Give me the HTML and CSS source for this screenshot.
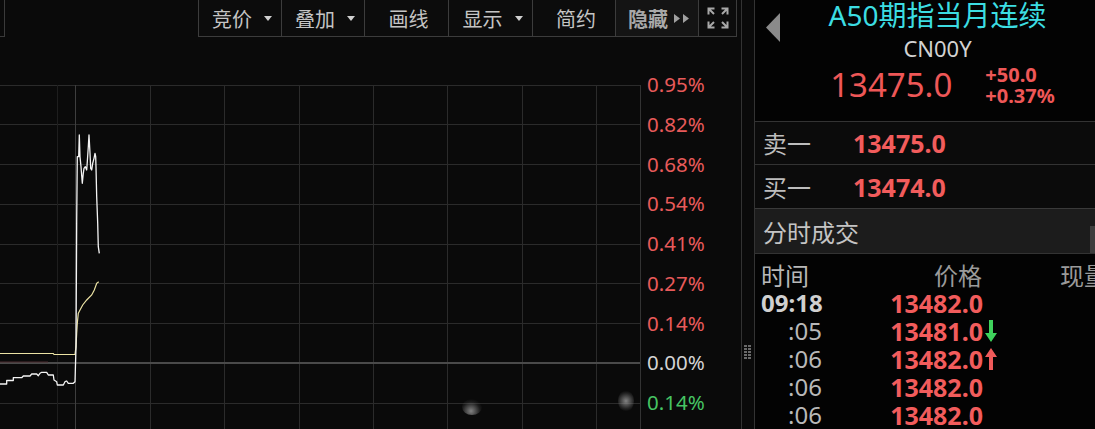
FILE: index.html
```html
<!DOCTYPE html>
<html lang="zh-CN">
<head>
<meta charset="utf-8">
<title>A50期指当月连续</title>
<link rel="stylesheet" href="styles.css">
</head>
<body>
<div class="app">
  <div class="left">
    <div class="toolbar">
      <div class="tb-edge"></div>
      <div class="tb-spacer"></div>
      <div class="tb-btn first w84"><span>竞价</span><svg class="caret" width="8" height="5" viewBox="0 0 8 5"><polygon points="0,0 8,0 4,5"/></svg></div>
      <div class="tb-btn w83"><span>叠加</span><svg class="caret" width="8" height="5" viewBox="0 0 8 5"><polygon points="0,0 8,0 4,5"/></svg></div>
      <div class="tb-btn w84"><span>画线</span></div>
      <div class="tb-btn w84"><span>显示</span><svg class="caret" width="8" height="5" viewBox="0 0 8 5"><polygon points="0,0 8,0 4,5"/></svg></div>
      <div class="tb-btn w83"><span>简约</span></div>
      <div class="tb-btn w83 hide"><span>隐藏</span><svg class="dbl" width="16" height="9" viewBox="0 0 16 9"><polygon points="0,0 6,4.5 0,9"/><polygon points="9,0 15,4.5 9,9"/></svg></div>
      <div class="tb-btn w38 full"><svg width="22" height="22" viewBox="0 0 22 22"><path d="M1.5 7.5V1.5H7.5M1.5 1.5L7 7M14.5 1.5H20.5V7.5M20.5 1.5L15 7M1.5 14.5V20.5H7.5M1.5 20.5L7 15M20.5 14.5V20.5H14.5M20.5 20.5L15 15"/></svg></div>
    </div>
    <div class="chart">
      <svg class="plot" width="641" height="392" viewBox="0 37 641 392">
        <g class="grid">
          <line x1="0" y1="85.5" x2="641" y2="85.5"/>
          <line x1="0" y1="124.5" x2="641" y2="124.5"/>
          <line x1="0" y1="164.5" x2="641" y2="164.5"/>
          <line x1="0" y1="204.5" x2="641" y2="204.5"/>
          <line x1="0" y1="244.5" x2="641" y2="244.5"/>
          <line x1="0" y1="283.5" x2="641" y2="283.5"/>
          <line x1="0" y1="323.5" x2="641" y2="323.5"/>
          <line x1="0" y1="403.5" x2="641" y2="403.5"/>
          <line class="faint" x1="57.5" y1="85" x2="57.5" y2="429"/>
          <line x1="150.5" y1="85" x2="150.5" y2="429"/>
          <line x1="224.5" y1="85" x2="224.5" y2="429"/>
          <line x1="299.5" y1="85" x2="299.5" y2="429"/>
          <line x1="373.5" y1="85" x2="373.5" y2="429"/>
          <line x1="447.5" y1="85" x2="447.5" y2="429"/>
          <line x1="522.5" y1="85" x2="522.5" y2="429"/>
          <line x1="596.5" y1="85" x2="596.5" y2="429"/>
        </g>
        <line class="zero" x1="0" y1="363" x2="641" y2="363"/>
        <line class="zero-red" x1="0" y1="362" x2="48" y2="362"/>
        <line class="open" x1="75.5" y1="85" x2="75.5" y2="429"/>
        <line class="border" x1="640.5" y1="85" x2="640.5" y2="429"/>
        <polyline class="avg" points="0,353.5 53.3,353.5 54,354.5 75,354.5 76,346.7 76.7,333.3 77.3,323.3 78.3,313.3 80,310 82.7,305 86.7,300 91.7,295 94.3,290 96.7,283.3 98.7,281.7"/>
        <polyline class="price" points="0,384 6.7,384 6.7,380.5 13.3,380.5 13.3,377.7 21.7,377.7 23.3,376 30,376 31.7,374 36.7,374 38.3,375.7 40,373.3 41.7,372.3 46.7,372.3 48.3,375 53.3,375 54,380 56.7,381.7 57.3,385 63.3,385 65,381.7 66.7,381 68.3,383.3 73.3,383.3 75,381.7 76,346.7 76.7,220 77.3,156.7 78.7,156.7 79.3,135 80,156.7 81,166.7 82.3,183.3 83.3,173.3 84,168.3 85.3,166.7 86.7,170 87.3,161.7 88.3,146.7 89,135 90,153.3 90.7,168.3 91.7,170 92.7,163.3 94,158.3 95,153.3 95.7,156.7 96,167.3 96.7,196.7 97.7,223.3 98.3,246.7 99.3,253.3"/>
      </svg>
      <div class="axis">
        <div class="lbl up">0.95%</div>
        <div class="lbl up">0.82%</div>
        <div class="lbl up">0.68%</div>
        <div class="lbl up">0.54%</div>
        <div class="lbl up">0.41%</div>
        <div class="lbl up">0.27%</div>
        <div class="lbl up">0.14%</div>
        <div class="lbl flat">0.00%</div>
        <div class="lbl down">0.14%</div>
      </div>
      <div class="blob blob-a"></div>
      <div class="blob blob-b"></div>
    </div>
  </div>
  <div class="splitter">
    <svg class="grip" width="8" height="16" viewBox="0 0 8 16"><g><rect x="0" y="0" width="3" height="2"/><rect x="4" y="0" width="3" height="2"/><rect x="0" y="3" width="3" height="2"/><rect x="4" y="3" width="3" height="2"/><rect x="0" y="6" width="3" height="2"/><rect x="4" y="6" width="3" height="2"/><rect x="0" y="9" width="3" height="2"/><rect x="4" y="9" width="3" height="2"/><rect x="0" y="12" width="3" height="2"/><rect x="4" y="12" width="3" height="2"/></g></svg>
  </div>
  <div class="panel">
    <div class="quote">
      <svg class="back" width="14" height="29" viewBox="0 0 14 29"><polygon points="14,0 14,29 0,14.5"/></svg>
      <div class="info">
        <div class="title">A50期指当月连续</div>
        <div class="code">CN00Y</div>
        <div class="price-row">
          <div class="last">13475.0</div>
          <div class="chg"><div>+50.0</div><div>+0.37%</div></div>
        </div>
      </div>
    </div>
    <div class="book-row"><span class="book-label">卖一</span><span class="book-price">13475.0</span></div>
    <div class="book-row"><span class="book-label">买一</span><span class="book-price">13474.0</span></div>
    <div class="ticks-head"><span>分时成交</span><div class="head-btn"></div></div>
    <div class="ticks">
      <div class="tick thead"><span class="t">时间</span><span class="p">价格</span><span class="a"></span><span class="v">现量</span></div>
      <div class="tick"><span class="t bold">09:18</span><span class="p">13482.0</span><span class="a"></span><span class="v"></span></div>
      <div class="tick"><span class="t">:05</span><span class="p">13481.0</span><span class="a"><svg width="12" height="22" viewBox="0 0 12 22"><path class="dn" d="M4 0H8V13H12L6 22L0 13H4Z"/></svg></span><span class="v"></span></div>
      <div class="tick"><span class="t">:06</span><span class="p">13482.0</span><span class="a"><svg width="12" height="22" viewBox="0 0 12 22"><path class="upa" d="M4 22H8V9H12L6 0L0 9H4Z"/></svg></span><span class="v"></span></div>
      <div class="tick"><span class="t">:06</span><span class="p">13482.0</span><span class="a"></span><span class="v"></span></div>
      <div class="tick"><span class="t">:06</span><span class="p">13482.0</span><span class="a"></span><span class="v"></span></div>
    </div>
  </div>
</div>
</body>
</html>
```

FILE: styles.css
```css
* { box-sizing: border-box; }
html, body { margin: 0; padding: 0; }
body {
  width: 1095px;
  height: 429px;
  overflow: hidden;
  background: #0a0a0a;
  font-family: "Noto Sans", "Noto Sans CJK SC", sans-serif;
  color: #c0c0c0;
}
.app { display: flex; width: 1095px; height: 429px; }

/* left side */
.left { width: 741px; display: flex; flex-direction: column; }
.toolbar { display: flex; height: 37px; }
.tb-edge { width: 5px; border-right: 1px solid #3a3a3a; border-bottom: 1px solid #3a3a3a; }
.tb-spacer { width: 193px; }
.tb-btn {
  height: 37px;
  display: flex;
  align-items: center;
  justify-content: center;
  gap: 12px;
  border-right: 1px solid #3c3c3c;
  border-bottom: 1px solid #3c3c3c;
  background: #0c0c0c;
  font-family: "Noto Sans CJK SC", sans-serif;
  font-size: 20px;
  color: #c4c4c4;
  padding-left: 4px;
}
.tb-btn.first { border-left: 1px solid #3c3c3c; }
.w84 { width: 84px; }
.w83 { width: 83px; }
.w38 { width: 38px; padding-left: 0; }
.caret polygon { fill: #d0d0d0; }
.tb-btn.hide { background: #141414; color: #a8a8a8; font-weight: 700; gap: 6px; }
.dbl polygon { fill: #a0a0a0; }
.full svg path { fill: none; stroke: #a8a8a8; stroke-width: 2; }

.chart { position: relative; flex: 1; display: flex; }
.plot { display: block; flex: none; }
.grid line { stroke: #2b2b2b; stroke-width: 1; }
.grid line.faint { stroke: #1e1e1e; }
.zero { stroke: #4a4a4a; stroke-width: 2; }
.zero-red { stroke: #4a2a2e; stroke-width: 1; }
.open { stroke: #3e3e3e; stroke-width: 1; }
.border { stroke: #333; stroke-width: 1; }
.avg { fill: none; stroke: #ece3a4; stroke-width: 1.2; }
.price { fill: none; stroke: #f4f4f4; stroke-width: 1.3; stroke-linejoin: round; }

.axis { display: flex; flex-direction: column; padding-top: 28px; padding-left: 6px; }
.lbl { height: 39.75px; line-height: 39.75px; font-size: 20.5px; }
.lbl.up { color: #e85a5a; }
.lbl.flat { color: #d4d4d4; }
.lbl.down { color: #46c463; }

.blob { position: absolute; border-radius: 50%; pointer-events: none; }
.blob-a { left: 462px; top: 362px; width: 20px; height: 16px; background: radial-gradient(circle at 45% 75%, rgba(210,210,210,0.6), rgba(110,110,110,0.18) 55%, rgba(0,0,0,0) 75%); }
.blob-b { left: 618px; top: 353px; width: 16px; height: 22px; background: radial-gradient(circle at 50% 50%, rgba(170,170,170,0.75), rgba(100,100,100,0.3) 55%, rgba(0,0,0,0) 75%); }

/* splitter */
.splitter {
  width: 14px;
  border-left: 1px solid #333;
  border-right: 1px solid #333;
  display: flex;
  align-items: flex-start;
  justify-content: center;
  padding-top: 345px;
}
.grip rect { fill: #6a6a6a; }

/* right panel */
.panel { width: 340px; background: #030303; display: flex; flex-direction: column; }
.quote { height: 122px; display: flex; align-items: flex-start; border-bottom: 1px solid #333; }
.back { margin-left: 11px; margin-top: 13px; flex: none; }
.back polygon { fill: #8a8a8a; }
.info { flex: 1; display: flex; flex-direction: column; align-items: center; }
.title { font-size: 28px; line-height: 31px; color: #3cdde2; }
.code { font-size: 22px; line-height: 30px; color: #d2d2d2; margin-top: 2px; }
.price-row { display: flex; align-items: center; gap: 33px; margin-top: 1px; padding-left: 10px; }
.last { font-size: 33px; line-height: 40px; color: #ee5757; }
.chg { font-size: 20px; line-height: 21px; font-weight: 700; color: #ee5757; }

.book-row {
  height: 44px;
  display: flex;
  align-items: center;
  background: #0b0b0b;
  border-bottom: 1px solid #333;
  padding-left: 8px;
}
.book-label { font-family: "Noto Sans CJK SC", sans-serif; font-size: 24px; color: #bdbdbd; width: 90px; }
.book-price { font-size: 25px; font-weight: 700; color: #f25c5c; }

.ticks-head {
  height: 46px;
  display: flex;
  align-items: center;
  justify-content: space-between;
  background: #1c1c1c;
  border-top: 1px solid #3a3a3a;
  border-bottom: 1px solid #333;
  margin-top: -1px;
  padding-left: 8px;
  font-family: "Noto Sans CJK SC", sans-serif;
  font-size: 24px;
  color: #c4c4c4;
}
.head-btn { width: 5px; height: 27px; background: #3e3e3e; margin-top: 16px; }

.ticks { padding-left: 6px; padding-top: 6px; }
.tick { display: grid; grid-template-columns: 61px 161px 14px 1fr; height: 28px; align-items: center; }
.tick span { line-height: 28px; }
.tick .t { text-align: right; font-size: 24px; color: #b8b8b8; }
.tick .t.bold { font-weight: 700; color: #d0d0d0; }
.tick .p { text-align: right; font-size: 25px; font-weight: 700; color: #f25c5c; }
.tick .a { display: flex; justify-content: flex-end; }
.tick .a svg { display: block; }
.dn { fill: #3fd25c; }
.upa { fill: #f05a5a; }
.tick .v { font-size: 24px; }
.thead { height: 29px; }
.thead span { font-family: "Noto Sans CJK SC", sans-serif; color: #9a9a9a; font-weight: 400; line-height: 29px; }
.thead .t { text-align: left; }
.thead .v { padding-left: 63px; color: #9a9a9a; font-size: 24px; white-space: nowrap; }
.thead .p { color: #9a9a9a; font-weight: 400; font-size: 24px; padding-right: 1px; }
```
